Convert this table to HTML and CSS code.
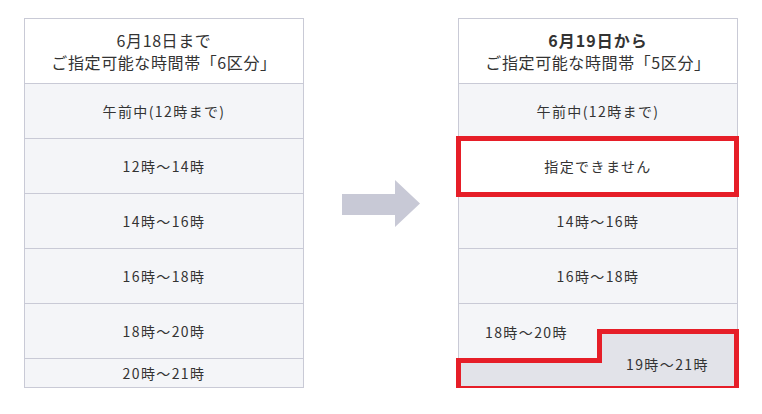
FILE: index.html
```html
<!DOCTYPE html>
<html lang="ja">
<head>
<meta charset="utf-8">
<link rel="stylesheet" href="styles.css">
</head>
<body>
<div class="page">
  <div class="table">
    <div class="head"><div class="head-text">6月18日まで<br>ご指定可能な時間帯「6区分」</div></div>
    <div class="row">午前中(12時まで)</div>
    <div class="row">12時～14時</div>
    <div class="row">14時～16時</div>
    <div class="row">16時～18時</div>
    <div class="row">18時～20時</div>
    <div class="row last">20時～21時</div>
  </div>
  <svg class="arrow" width="78" height="47" viewBox="0 0 78 47">
    <polygon points="0,14 53,14 53,0 78,23.5 53,47 53,35 0,35" fill="#c8c9d6"/>
  </svg>
  <div class="table right">
    <div class="head"><div class="head-text"><b>6月19日から</b><br>ご指定可能な時間帯「5区分」</div></div>
    <div class="row">午前中(12時まで)</div>
    <div class="row white">指定できません</div>
    <div class="row">14時～16時</div>
    <div class="row">16時～18時</div>
    <div class="row tall"><span class="tall-text">18時～20時</span></div>
    <div class="mark-box"></div>
    <div class="mark-step">
      <svg class="step-svg" width="283" height="62" viewBox="0 0 283 62">
        <polygon points="143.5,2.5 280.5,2.5 280.5,59.5 2.5,59.5 2.5,31.5 143.5,31.5" fill="#e2e3e9" stroke="#e61e28" stroke-width="5" stroke-linejoin="miter"/>
      </svg>
      <span class="step-text">19時～21時</span>
    </div>
  </div>
</div>
</body>
</html>
```
FILE: styles.css
```css
html, body {
  margin: 0;
  padding: 0;
  background: #fff;
}
body {
  font-family: "Noto Sans CJK JP", "Noto Sans", sans-serif;
  color: #333;
}
.page {
  display: flex;
  align-items: center;
  gap: 38px;
  padding: 18px 0 0 24px;
}
.table {
  position: relative;
  width: 280px;
  height: 370px;
  box-sizing: border-box;
  border: 1px solid #c9cad6;
  display: flex;
  flex-direction: column;
}
.head {
  height: 64px;
  display: flex;
  align-items: center;
  justify-content: center;
  background: #fff;
}
.head-text {
  text-align: center;
  font-size: 16px;
  line-height: 22px;
  letter-spacing: 0.6px;
}
.head-text b {
  font-weight: 700;
  letter-spacing: 1px;
}
.row {
  height: 54px;
  border-top: 1px solid #c9cad6;
  background: #f4f5f8;
  display: flex;
  align-items: center;
  justify-content: center;
  font-size: 14px;
  letter-spacing: 1.4px;
}
.row.last {
  height: 28px;
}
.row.white {
  background: #fff;
}
.row.tall {
  height: 83px;
  align-items: flex-start;
  justify-content: flex-start;
}
.tall-text {
  padding: 18px 0 0 26px;
}
.mark-box {
  position: absolute;
  left: -3px;
  top: 117px;
  width: 283px;
  height: 61px;
  box-sizing: border-box;
  border: 5px solid #e61e28;
}
.mark-step {
  position: absolute;
  left: -3px;
  top: 310px;
  width: 283px;
  height: 62px;
}
.step-svg {
  position: absolute;
  left: 0;
  top: 0;
}
.step-text {
  position: absolute;
  left: 170px;
  top: 25px;
  font-size: 14px;
  letter-spacing: 1.4px;
}
```
